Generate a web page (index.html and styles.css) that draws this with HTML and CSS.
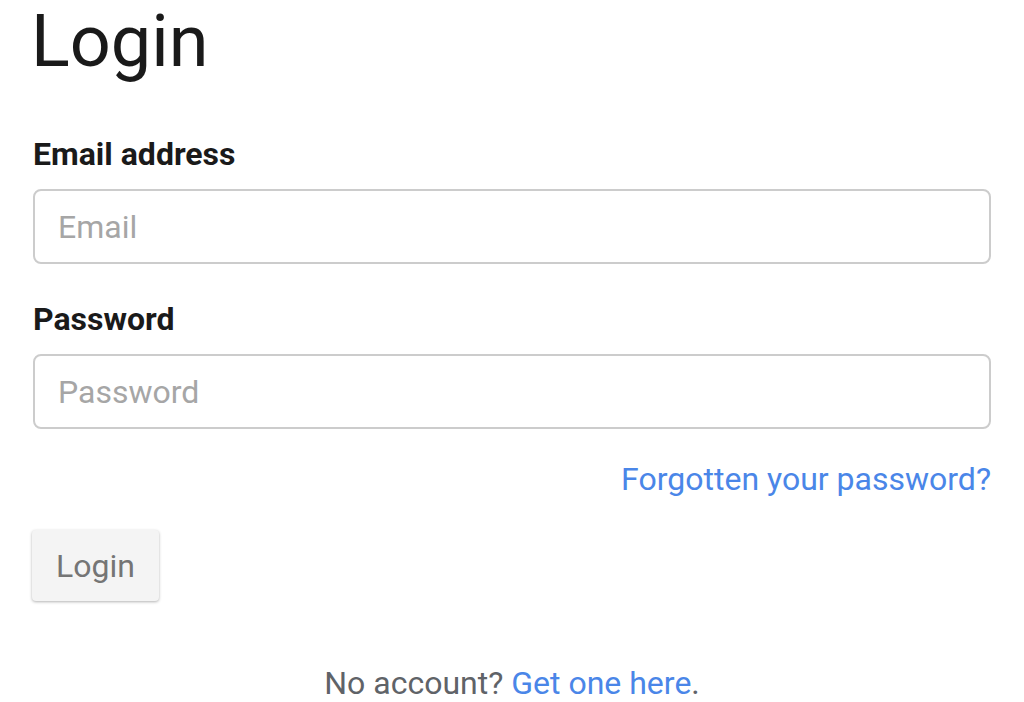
FILE: index.html
```html
<!DOCTYPE html>
<html lang="en">
<head>
<meta charset="utf-8">
<title>Login</title>
<link rel="stylesheet" href="styles.css">
</head>
<body>
<main class="page">
  <h1 class="title">Login</h1>
  <form class="form">
    <label class="field">
      <span class="label">Email address</span>
      <input class="input" type="email" placeholder="Email">
    </label>
    <label class="field">
      <span class="label">Password</span>
      <input class="input" type="password" placeholder="Password">
    </label>
    <div class="forgot-row"><a class="link" href="#">Forgotten your password?</a></div>
    <div class="actions"><button class="btn" type="button">Login</button></div>
  </form>
  <p class="signup">No account? <a class="link" href="#">Get one here</a>.</p>
</main>
</body>
</html>
```
FILE: styles.css
```css
html, body { margin: 0; padding: 0; background: #fff; }
body { font-family: Roboto, "Liberation Sans", sans-serif; color: #1a1a1a; }
.page { padding: 0 33px; display: flex; flex-direction: column; }
.title { font-size: 72px; font-weight: 400; line-height: 84px; margin: 0 0 0 -2px; color: #1a1a1a; }
.form { display: flex; flex-direction: column; margin-top: 50px; }
.field { display: flex; flex-direction: column; gap: 15px; margin-bottom: 35px; }
.label { font-size: 32px; font-weight: 700; line-height: 40px; color: #1a1a1a; }
.input { box-sizing: border-box; height: 75px; border: 2px solid #cccccc; border-radius: 8px; padding: 0 23px; font-family: Roboto, sans-serif; font-size: 32px; color: #333; background: #fff; outline: none; }
.input::placeholder { color: #a6a6a6; }
.forgot-row { display: flex; justify-content: flex-end; margin-top: -5px; }
.link { color: #4a86e8; text-decoration: none; }
.forgot-row .link { font-size: 32px; line-height: 40px; }
.actions { display: flex; margin-top: 31px; }
.btn { font-family: Roboto, sans-serif; font-size: 32px; color: #757575; background: #f4f4f4; border: none; border-radius: 4px; height: 71px; padding: 0 24px; margin-left: -1px; box-shadow: 0 1px 3px rgba(0,0,0,0.3); }
.signup { text-align: center; font-size: 32px; color: #5f6368; margin: 62px 0 0; line-height: 40px; }
```
